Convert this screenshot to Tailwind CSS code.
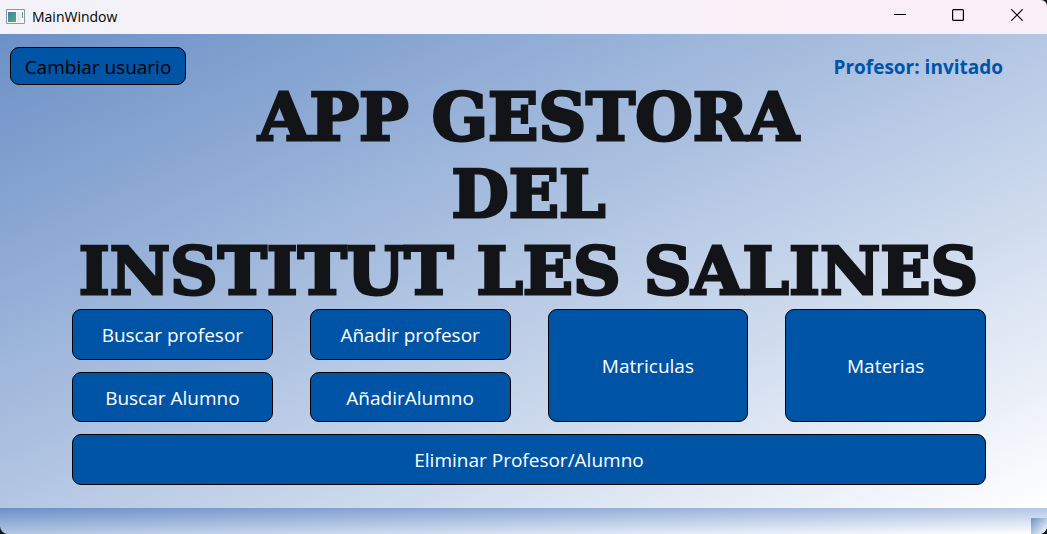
<!DOCTYPE html>
<html lang="es">
<head>
<meta charset="utf-8">
<meta name="viewport" content="width=device-width, initial-scale=1">
<title>MainWindow</title>
<script src="https://cdn.jsdelivr.net/npm/@tailwindcss/browser@4"></script>
</head>
<body class="bg-[#151515] font-['Open_Sans','Noto_Sans',sans-serif]">
<div class="flex min-h-screen flex-col overflow-hidden rounded-tr-md rounded-b-lg">
  <header class="flex h-[34px] shrink-0 items-center bg-linear-to-r from-[#f3f2f9] to-[#faeef7] pl-1.5">
    <svg class="h-4 w-5" viewBox="0 0 20 16" aria-hidden="true">
      <defs><linearGradient id="pane" x2="1" y2="1"><stop stop-color="#477db0"/><stop offset="1" stop-color="#55ad78"/></linearGradient></defs>
      <path d="M.5.5h18v14H.5z" fill="#f7f7f7" stroke="#92969d"/>
      <path d="M2 3h8v10H2z" fill="url(#pane)"/>
      <path d="M11 3h4v10h-4z" fill="#e8ecee"/>
      <path d="M16 3h1v6h-1z" fill="#4c9d8e"/>
    </svg>
    <span class="ml-1.5 text-sm text-black">MainWindow</span>
    <div class="ml-auto flex h-full pb-1">
      <button type="button" aria-label="Minimizar" class="flex w-[58px] items-center justify-center"><svg class="size-3" viewBox="0 0 12 12"><path d="M0 5.5h12" stroke="#000"/></svg></button>
      <button type="button" aria-label="Maximizar" class="flex w-[58px] items-center justify-center"><svg class="size-3" viewBox="0 0 12 12"><rect x=".6" y=".6" width="10.8" height="10.8" rx="1" fill="none" stroke="#000" stroke-width="1.2"/></svg></button>
      <button type="button" aria-label="Cerrar" class="flex w-[60px] items-center justify-center"><svg class="size-3" viewBox="0 0 12 12"><path d="M.3.3l11.4 11.4M11.7.3L.3 11.7" stroke="#000" stroke-width="1.2"/></svg></button>
    </div>
  </header>
  <main class="flex flex-1 flex-col bg-linear-to-br from-[#6c90c6] to-white pt-[13px] pb-[23px]">
    <div class="flex items-center justify-between pr-11 pl-2.5">
      <button type="button" class="h-[38px] w-44 rounded-[9px] border border-black bg-[#0054a6] pt-0.5 text-[19px] text-black">Cambiar usuario</button>
      <p class="pt-0.5 text-[19px] font-bold text-[#0054a6]">Profesor: invitado</p>
    </div>
    <h1 class="-mt-1.5 pl-2.5 text-center font-['DejaVu_Serif',serif] text-[66px] leading-[77px] font-bold whitespace-nowrap text-[#121417] [-webkit-text-stroke:3px_#121417]">APP GESTORA<br>DEL<br>INSTITUT LES SALINES</h1>
    <div class="-mt-px grid flex-1 grid-cols-4 grid-rows-3 gap-x-[37px] gap-y-3 pr-[61px] pl-[72px] text-[19px] text-white">
      <button type="button" class="rounded-[9px] border border-black bg-[#0054a6] pt-0.5">Buscar profesor</button>
      <button type="button" class="rounded-[9px] border border-black bg-[#0054a6] pt-0.5">Añadir profesor</button>
      <button type="button" class="row-span-2 rounded-[9px] border border-black bg-[#0054a6] pt-0.5">Matriculas</button>
      <button type="button" class="row-span-2 rounded-[9px] border border-black bg-[#0054a6] pt-0.5">Materias</button>
      <button type="button" class="rounded-[9px] border border-black bg-[#0054a6] pt-0.5">Buscar Alumno</button>
      <button type="button" class="rounded-[9px] border border-black bg-[#0054a6] pt-0.5">AñadirAlumno</button>
      <button type="button" class="col-span-4 rounded-[9px] border border-black bg-[#0054a6] pt-0.5">Eliminar Profesor/Alumno</button>
    </div>
  </main>
  <footer class="flex h-[26px] shrink-0 items-end justify-end bg-linear-to-br from-[#6c90c6] to-white">
    <div class="size-4 bg-linear-to-br from-[#6c90c6] to-white"></div>
  </footer>
</div>
</body>
</html>
